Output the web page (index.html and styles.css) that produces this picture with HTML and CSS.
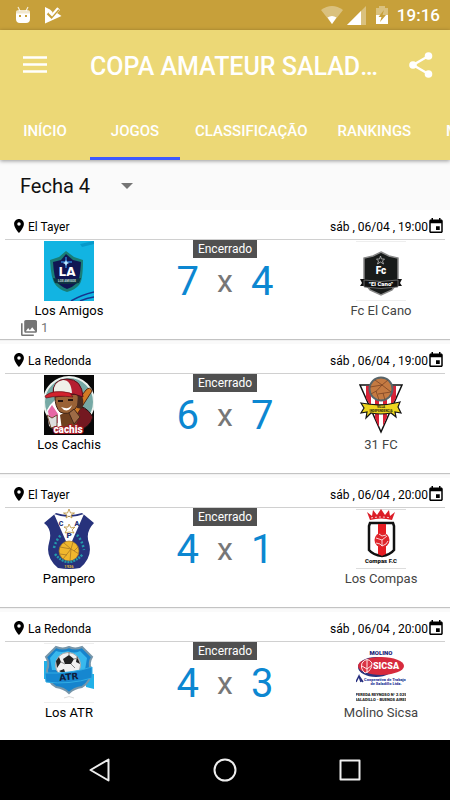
FILE: index.html
```
<!DOCTYPE html>
<html lang="pt-BR">
	<head>
		<meta charset="utf-8">
		<meta name="viewport" content="width=device-width, initial-scale=1">
		<title>Copa Amateur Saladillo - Jogos</title>
		<link rel="stylesheet" href="styles.css">
	</head>
	<body>
		<svg class="sprite" aria-hidden="true">
			<symbol id="pin" viewBox="5 2 14 20">
				<path d="M12 2C8.1 2 5 5.1 5 9c0 5.2 7 13 7 13s7-7.8 7-13c0-3.9-3.1-7-7-7zm0 9.5a2.5 2.5 0 1 1 0-5 2.5 2.5 0 0 1 0 5z"/>
			</symbol>
			<symbol id="calendar" viewBox="3 1 18 20">
				<path d="M17 12h-5v5h5v-5zM16 1v2H8V1H6v2H5c-1.1 0-2 .9-2 2v14c0 1.1.9 2 2 2h14c1.1 0 2-.9 2-2V5c0-1.1-.9-2-2-2h-1V1h-2zm3 18H5V8h14v11z"/>
			</symbol>
		</svg>

		<div class="statusbar">
			<svg width="16" height="18" viewBox="0 0 16 18" fill="#fff">
				<path d="M3 1l2 4M13 1l-2 4" stroke="#fff" stroke-width="1.2" opacity=".8"/>
				<path d="M1 8V6q0-2 3-2h8q3 0 3 2v2z" opacity=".75"/>
				<path fill-rule="evenodd" d="M1 7.5h14V13q0 4-4 4H5q-4 0-4-4zM4 9v2h2V9zM10 9v2h2V9z"/>
			</svg>
			<svg width="17" height="18" viewBox="0 0 17 18">
				<path d="M0 1l5 2.500 4 4 4-5.500 2 2-3 3 4.500 3L0 17.500z" fill="#fff"/>
				<path d="M3 7l3.500 3.500L13 3" fill="none" stroke="#c7a03a" stroke-width="3.500"/>
				<path d="M4 6l3 3 6-7" fill="none" stroke="#fff" stroke-width="2"/>
			</svg>
			<div class="signals">
				<svg class="wifi" width="22" height="18" viewBox="0 0 22 18" fill="#fff">
					<path d="M0 4Q11-4 22 4L11 18z" opacity=".35"/>
					<path d="M6.500 11.500Q11 8.500 15.500 11.500L11 18z"/>
				</svg>
				<svg class="cell" width="19" height="19" viewBox="0 0 19 19" fill="#fff">
					<path d="M19 0v19H0z" opacity=".35"/>
					<path d="M14 5v14H0z"/>
				</svg>
				<svg class="battery" width="12" height="18" viewBox="0 0 12 18">
					<path d="M3 0h6v2h3v16H0V2h3z" fill="#fff" opacity=".35"/>
					<path d="M0 9h12v9H0z" fill="#fff"/>
					<path d="M8 4L2.500 11h3L4 16l6-7H6.500z" fill="#c7a03a"/>
				</svg>
				<span>19:16</span>
			</div>
		</div>

		<header class="appbar">
			<div class="toolbar">
				<button class="icon-btn" aria-label="Menu">
					<svg width="24" height="18" viewBox="0 0 24 18"><path d="M0 1.500h24M0 8.500h24M0 15.500h24" stroke="#fff" stroke-width="2.500"/></svg>
				</button>
				<h1>COPA AMATEUR SALADILLO</h1>
				<button class="icon-btn" aria-label="Compartilhar">
					<svg width="24" height="26" viewBox="0 0 24 26" fill="#fff">
						<path d="M19.500 4L4 13l15.500 9" fill="none" stroke="#fff" stroke-width="2.400"/>
						<circle cx="19.500" cy="4" r="3.800"/><circle cx="4" cy="13" r="3.800"/><circle cx="19.500" cy="22" r="3.800"/>
					</svg>
				</button>
			</div>
			<nav class="tabs">
				<a href="#inicio">INÍCIO</a>
				<a href="#jogos" class="active">JOGOS</a>
				<a href="#classificacao">CLASSIFICAÇÃO</a>
				<a href="#rankings">RANKINGS</a>
				<a href="#midias">MÍDIAS</a>
			</nav>
		</header>

		<main id="jogos">
			<div class="filter">
				<select aria-label="Fecha">
					<option>Fecha 4</option>
					<option>Fecha 3</option>
					<option>Fecha 2</option>
					<option>Fecha 1</option>
				</select>
			</div>

			<article class="match">
				<div class="match-head">
					<svg class="pin"><use href="#pin"/></svg>
					<span>El Tayer</span>
					<time>sáb , 06/04 , 19:00</time>
					<svg class="calendar"><use href="#calendar"/></svg>
				</div>
				<div class="match-body">
					<div class="team home">
						<svg class="crest" viewBox="0 0 50 60">
							<path d="M0 0h50v60H0z" fill="#12b4e2"/>
							<path d="M36 3l14-3v3L38 6z" fill="#0799ca"/>
							<path d="M27 60q10-6 23-9M36 60q7-3 14-4" fill="none" stroke="#16358e" stroke-width="1.500"/>
							<path d="M22 10l8 6 9 3q0 21-4 25-4 5-12 7-9-3-12-8-4-5-5-24l9-3z" fill="#197d76"/>
							<path d="M22 13l7 6 8 2q-1 18-4 21-4 4-10 6-7-3-10-7-3-4-4-20l8-2z" fill="#101653"/>
							<path d="M22 16v11M17 21h11" stroke="#245fae" stroke-width="2"/>
							<path d="M22 19l1 2 2 1-2 1-1 2-1-2-2-1 2-1z" fill="#b8e7ff"/>
							<text x="23" y="35" class="crest-text wide" font-size="12" fill="#fff">LA</text>
							<path d="M9 37q14 3 28 0l-2 5q-12 2-24 0z" fill="#0e3542"/>
							<text x="23" y="41" class="crest-text" font-size="3" fill="#b8cdd0">LOS AMIGOS</text>
						</svg>
						<span>Los Amigos</span>
					</div>
					<div class="result">
						<span class="status">Encerrado</span>
						<div class="score"><b>7</b><i>x</i><b>4</b></div>
					</div>
					<div class="team away">
						<svg class="crest" viewBox="0 0 50 60">
							<path d="M0 .5h50M0 59.500h50" stroke="#eee"/>
							<path d="M25 11l8 4 9 2v24l-6 8-11 5-11-5-6-8V17l9-2z" fill="#181b1a" stroke="#888" stroke-width="1.500"/>
							<path d="M24.500 15l1 3h3l-2 2 1 3-3-2-3 2 1-3-2-2h3z" fill="none" stroke="#bbb" stroke-width=".8"/>
							<text x="25" y="33" class="crest-text" font-size="10" fill="#fff">Fc</text>
							<path d="M4 38h6v7H4l2-3zM46 38h-6v7h6l-2-3z" fill="#111"/>
							<path d="M8 39q17 3 34 0v7q-17 3-34 0z" fill="#111" stroke="#888" stroke-width=".7"/>
							<text x="25" y="45" class="crest-text" font-size="6" fill="#fff">"El Cano"</text>
						</svg>
						<span>Fc El Cano</span>
					</div>
				</div>
				<a class="photos" href="#fotos" aria-label="1 foto">
					<svg width="16" height="16" viewBox="2 2 20 20" fill="#757575"><path d="M22 16V4c0-1.100-.9-2-2-2H8c-1.100 0-2 .9-2 2v12c0 1.100.9 2 2 2h12c1.100 0 2-.9 2-2zm-11-4l2.030 2.710L16 11l4 5H8l3-4zM2 6v14c0 1.100.9 2 2 2h14v-2H4V6H2z"/></svg>
					<span>1</span>
				</a>
			</article>

			<article class="match">
				<div class="match-head">
					<svg class="pin"><use href="#pin"/></svg>
					<span>La Redonda</span>
					<time>sáb , 06/04 , 19:00</time>
					<svg class="calendar"><use href="#calendar"/></svg>
				</div>
				<div class="match-body">
					<div class="team home">
						<svg class="crest" viewBox="0 0 50 60">
							<path d="M0 0h50v60H0z" fill="#080808"/>
							<circle cx="25" cy="27" r="25" fill="#76a9a5" stroke="#eef3ef" stroke-width="2"/>
							<path d="M3 35q3-6 8-10l7 13 18-6 10 10-6 11-24 5-11-7z" fill="#fff"/>
							<path d="M31 32q10-3 18 10-3 11-16 14l-5-14z" fill="#741820" stroke="#1c1010"/>
							<path d="M25 37l17-22q4-4 6 1L32 41z" fill="#d27a24" stroke="#552a13"/>
							<path d="M16 40l11-6 9 6-5 12-13 3z" fill="#70401f"/>
							<path d="M11 22l22-3q5 7-2 15-7 7-15 3-5-5-5-15z" fill="#9a6236" stroke="#412414"/>
							<path d="M17 32q8 3 11-2-2 7-8 5z" fill="#fff"/>
							<path d="M14 26h5M24 25h5" stroke="#251410" stroke-width="2"/>
							<path d="M34 18q8 4 4 16l-5-1z" fill="#492b20"/>
							<path d="M9 20Q8 4 23 4q15 0 16 18l-9-3-16 2z" fill="#b51f31" stroke="#571019"/>
							<path d="M10 17q-1-10 9-12 8 0 9 13z" fill="#f0f0e9"/>
							<path d="M1 21q8-7 25-3l3 4q-15-2-27 1z" fill="#d3212d" stroke="#671019" stroke-width=".7"/>
							<path d="M4 36l4-6 6 9v9H6z" fill="#e767a5"/>
							<path d="M3 40l5 3 5-3v11l-6 2z" fill="#ddd" stroke="#6c4931"/>
							<path d="M25 38l5-4 6 8-6 7z" fill="#9e6b46" stroke="#442719"/>
							<text x="24" y="58" class="crest-text outlined" font-size="10">cachis</text>
						</svg>
						<span>Los Cachis</span>
					</div>
					<div class="result">
						<span class="status">Encerrado</span>
						<div class="score"><b>6</b><i>x</i><b>7</b></div>
					</div>
					<div class="team away">
						<svg class="crest" viewBox="0 0 50 60">
							<path d="M4 10h42L25 57z" fill="#fff" stroke="#111" stroke-width="1.500"/>
							<path d="M10 11h5v21l-5-9zM19 11h4v41l-4-9zM27 11h4v31l-4 9zM35 11h5v12l-5 9z" fill="#d82337"/>
							<circle cx="25" cy="14" r="11.500" fill="#c47a42" stroke="#58656a" stroke-width="2"/>
							<path d="M14 12l12-2 9 7M19 5l7 5 6-5M26 10q-5 7-11 9M20 16l3 9M22 19l13-2M27 18l2 7" fill="none" stroke="#7b4425" stroke-width=".8"/>
							<path d="M5 28q20 4 39-1l-2 5 3 6-6-1 1 5-5-4q-10 2-20 0l-5 5 1-6-6 1 3-5z" fill="#eed51f" stroke="#151515" stroke-width="1.200"/>
							<text x="25" y="33" class="crest-text" font-size="3" fill="#332c10">VILLA</text>
							<text x="25" y="37" class="crest-text" font-size="3" fill="#332c10">INDEPENDENCIA</text>
						</svg>
						<span>31 FC</span>
					</div>
				</div>
			</article>

			<article class="match">
				<div class="match-head">
					<svg class="pin"><use href="#pin"/></svg>
					<span>El Tayer</span>
					<time>sáb , 06/04 , 20:00</time>
					<svg class="calendar"><use href="#calendar"/></svg>
				</div>
				<div class="match-body">
					<div class="team home">
						<svg class="crest" viewBox="0 0 50 60">
							<path d="M12 4q13 4 26 0l12 10q-9 9-5 20 4 14-9 25-11 2-22 0Q1 48 5 34 9 21 0 14z" fill="#27327c"/>
							<path d="M10 5q15 6 30 0L25 39z" fill="#fff"/>
							<path d="M25 0l1.500 4h4L27 6l1 3-3-2-3 2 1-3-3.500-2h4zM25 15l2 4 4-1-3 3 2 3-5-1-4 1 2-4-3-2h4z" fill="#fff" stroke="#b9903a" stroke-width=".8"/>
							<text x="17" y="17" class="crest-text" font-size="7" fill="#252e72">C</text>
							<text x="33" y="17" class="crest-text" font-size="7" fill="#252e72">A</text>
							<text x="25" y="29" class="crest-text" font-size="8" fill="#252e72">P</text>
							<circle cx="25" cy="42" r="10" fill="#f0b72d" stroke="#9d7227" stroke-width=".7"/>
							<path d="M16 38l11 2 8 5M20 34l7 6-8 10M29 33l-2 7M27 40l-1 12M16 45l7 1M30 42l4-4" fill="none" stroke="#a77925" stroke-width=".8"/>
							<path d="M10 39Q12 31 17 26M33 26Q38 31 40 41" fill="none" stroke="#249aab" stroke-width="2.500" stroke-dasharray="2 2"/>
							<path d="M11 45q13 16 28 0" fill="none" stroke="#249aab" stroke-width="2.500" stroke-dasharray="2 1"/>
							<text x="25" y="59" class="crest-text" font-size="4" fill="#d5ae3c">1926</text>
						</svg>
						<span>Pampero</span>
					</div>
					<div class="result">
						<span class="status">Encerrado</span>
						<div class="score"><b>4</b><i>x</i><b>1</b></div>
					</div>
					<div class="team away">
						<svg class="crest" viewBox="0 0 50 60">
							<path d="M0 .5h50M0 59.500h50" stroke="#ddd"/>
							<path d="M14 11L11 3l5 4 1-6 4 5 4-6 4 6 4-5 1 6 5-4-3 8q-11-3-22 0z" fill="#dc1d27"/>
							<path d="M15 9q10-2 20 0" fill="none" stroke="#fff" stroke-width=".8" stroke-dasharray="2 2"/>
							<path d="M14 14h23l1 3v24q-4 5-12 6-9-1-13-6V17z" fill="#fff" stroke="#111" stroke-width="2.500"/>
							<path d="M22 15h8v30l-4 2-4-2z" fill="#e51c22"/>
							<circle cx="26" cy="31" r="7.500" fill="#df252b"/>
							<path d="M20 29l6 2 5-4M26 31v6M23 25l3 2 4-1M20 34l4 1 2 2 4-2 2-3" fill="none" stroke="#fff" stroke-width=".8"/>
							<text x="25" y="54" class="crest-text" font-size="6" fill="#111">Compas F.C</text>
						</svg>
						<span>Los Compas</span>
					</div>
				</div>
			</article>

			<article class="match">
				<div class="match-head">
					<svg class="pin"><use href="#pin"/></svg>
					<span>La Redonda</span>
					<time>sáb , 06/04 , 20:00</time>
					<svg class="calendar"><use href="#calendar"/></svg>
				</div>
				<div class="match-body">
					<div class="team home">
						<svg class="crest" viewBox="0 0 50 60">
							<path d="M0 .5h50M0 59.500h50" stroke="#eee"/>
							<path d="M0 18h6v18H0zM42 31h8v15l-8-2z" fill="#21b1e8"/>
							<path d="M12 4q7 3 13 0 6 3 13 0l10 10q-4 6-1 13 0 12-9 17-8 1-13 6-5-5-13-6Q3 39 3 27q3-7-1-13z" fill="#1684cd" stroke="#7796aa" stroke-width="2"/>
							<path d="M12 8q6 2 12 0 6 3 12 0l7 7-2 12H8L6 15z" fill="#38b8ed"/>
							<circle cx="24" cy="22" r="12.500" fill="#f1f1f1" stroke="#aaa"/>
							<path d="M19 16l6-4 5 4-3 5h-6zM12 18l3-4 2 5-4 6zM33 13l3 8-4-2zM15 28l5-2 2 6z" fill="#222"/>
							<path d="M17 19l4 2M27 21l4 4M25 12v-3M30 16l4-1" stroke="#888"/>
							<path d="M1 30q25 1 47-6v11q-23 7-46 4z" fill="#1687d0" stroke="#31ace3"/>
							<text x="25" y="37" class="crest-text wide" font-size="9" fill="#101d3d" transform="rotate(-6 25 36)">ATR</text>
							<path d="M20 55q5-3 10 0" fill="none" stroke="#ddd"/>
						</svg>
						<span>Los ATR</span>
					</div>
					<div class="result">
						<span class="status">Encerrado</span>
						<div class="score"><b>4</b><i>x</i><b>3</b></div>
					</div>
					<div class="team away">
						<svg class="crest" viewBox="0 0 50 60">
							<text x="25" y="12" class="crest-text" font-size="6" fill="#202378">MOLINO</text>
							<ellipse cx="20" cy="24" rx="18" ry="10" fill="#2b347e"/>
							<ellipse cx="25" cy="23" rx="23" ry="9" fill="#d72a3d"/>
							<path d="M6 20q5-7 10 0 0 8-7 10-5-4-3-10zM11 17v13M6 23l5 3 5-4" fill="#db3545" stroke="#ffe8e8"/>
							<text x="30" y="26" class="crest-text" font-size="9" fill="#fff">SICSA</text>
							<path d="M0 39l3-6 2 6M3 33l4 6" fill="none" stroke="#283080" stroke-width="1.500"/>
							<text x="29" y="38" class="crest-text" font-size="4" fill="#30419b">Cooperativa de Trabajo</text>
							<text x="30" y="42" class="crest-text" font-size="4" fill="#30419b">de Saladillo Ltda.</text>
							<text x="25" y="53" class="crest-text" font-size="4" fill="#222">PEREDA REYNOSO N° 2.025</text>
							<text x="25" y="58" class="crest-text" font-size="4" fill="#222">SALADILLO - BUENOS AIRES</text>
						</svg>
						<span>Molino Sicsa</span>
					</div>
				</div>
			</article>
		</main>

		<footer class="navbar">
			<button aria-label="Voltar"><svg width="24" height="26" viewBox="0 0 24 26"><path d="M20.500 2.500v21L2.500 13z"/></svg></button>
			<button aria-label="Início"><svg width="24" height="26" viewBox="0 0 24 26"><circle cx="12" cy="13" r="10.500"/></svg></button>
			<button aria-label="Recentes"><svg width="24" height="26" viewBox="0 0 24 26"><path d="M2.500 3.500h19v19h-19z"/></svg></button>
		</footer>
	</body>
</html>
```
FILE: styles.css
```
* {
  box-sizing: border-box;
}

html {
  height: 100%;
}

body {
  margin: 0;
  height: 100%;
  display: flex;
  flex-direction: column;
  overflow: hidden;
  background-color: #fafafa;
  color: #000;
  font-family: Roboto, "Noto Sans", sans-serif;
}

button {
  border: 0;
  padding: 0;
  background: none;
  cursor: pointer;
}

svg {
  display: block;
  flex: none;
}

.sprite {
  position: absolute;
  width: 0;
  height: 0;
}

.statusbar {
  flex: none;
  display: flex;
  align-items: center;
  gap: 14px;
  height: 30px;
  padding: 0 10px 0 15px;
  background-color: #c7a03a;
  color: #fff;
}

.signals {
  display: flex;
  align-items: center;
  margin-left: auto;
  font-size: 17px;
  font-weight: 500;
}

.cell {
  margin-left: 4px;
}

.battery {
  margin: 0 9px 0 10px;
}

.appbar {
  flex: none;
  position: relative;
  background-color: #ecd876;
  color: #fff;
  box-shadow: 0 1px 4px rgba(0, 0, 0, .4);
}

.toolbar {
  display: flex;
  align-items: center;
  height: 70px;
  padding: 0 17px 0 23px;
}

.toolbar h1 {
  flex: 1;
  min-width: 0;
  margin: 0 28px 0 43px;
  padding-top: 4px;
  overflow: hidden;
  white-space: nowrap;
  text-overflow: ellipsis;
  font-size: 25px;
  font-weight: 500;
  line-height: 32px;
}

.tabs {
  display: flex;
  overflow: hidden;
}

.tabs a {
  flex: none;
  min-width: 90px;
  height: 60px;
  padding: 0 15px;
  border-bottom: 3px solid transparent;
  color: #fff;
  font-size: 15px;
  font-weight: 500;
  line-height: 62px;
  text-align: center;
  text-decoration: none;
}

.tabs .active {
  border-color: #3d5afe;
}

main {
  flex: 1;
  min-height: 0;
  overflow: hidden;
}

.filter {
  display: flex;
  align-items: center;
  height: 50px;
  padding: 2px 20px 0;
}

.filter select {
  appearance: none;
  width: 115px;
  border: 0;
  padding: 0;
  background: url("data:image/svg+xml,%3Csvg xmlns='http://www.w3.org/2000/svg' width='12' height='6'%3E%3Cpath d='M0 0h12L6 6z' fill='%23757575'/%3E%3C/svg%3E") no-repeat right 2px center;
  color: #111;
  font-family: inherit;
  font-size: 20px;
}

.match {
  height: 129px;
  margin-bottom: 5px;
  padding: 0 5px;
  background-color: #fff;
  box-shadow: 0 1px 1px rgba(0, 0, 0, .22);
}

.match-head {
  display: flex;
  align-items: center;
  height: 30px;
  padding: 4px 2px 0 9px;
  border-bottom: 1px solid #d0d0d0;
  font-size: 12px;
}

.pin {
  width: 10px;
  height: 14px;
  margin: 0 4px 2px 0;
}

.match-head time {
  margin-left: auto;
}

.calendar {
  width: 14px;
  height: 15px;
  margin: 0 0 3px 1px;
}

.match-body {
  display: grid;
  grid-template-columns: 1fr 184px 1fr;
}

.team {
  display: flex;
  flex-direction: column;
  align-items: center;
  padding-top: 1px;
  font-size: 13px;
  line-height: 20px;
}

.away {
  color: #444;
}

.crest {
  width: 50px;
  height: 60px;
}

.crest-text {
  font-family: Roboto, sans-serif;
  font-weight: 900;
  text-anchor: middle;
}

.wide {
  font-family: "DejaVu Sans", sans-serif;
  font-weight: 700;
}

.outlined {
  fill: #fff;
  stroke: #a51622;
  stroke-width: 2px;
  paint-order: stroke;
}

.result {
  display: flex;
  flex-direction: column;
  align-items: center;
}

.status {
  padding: 1px 5px 0;
  background-color: #505050;
  color: #fff;
  font-size: 12px;
  line-height: 17px;
}

.score {
  display: flex;
  align-items: center;
  gap: 18px;
  line-height: 47px;
}

.score b {
  color: #0c87d1;
  font-size: 40px;
  font-weight: 400;
}

.score i {
  color: #777;
  font-size: 32px;
  font-style: normal;
}

.photos {
  display: flex;
  align-items: center;
  gap: 4px;
  width: 40px;
  margin: -1px 0 0 16px;
  color: #777;
  font-size: 13px;
  line-height: 16px;
  text-decoration: none;
}

.navbar {
  flex: none;
  display: flex;
  justify-content: center;
  gap: 101px;
  height: 60px;
  background-color: #000;
}

.navbar svg {
  fill: none;
  stroke: #eee;
  stroke-width: 2px;
  stroke-linejoin: round;
}
```
